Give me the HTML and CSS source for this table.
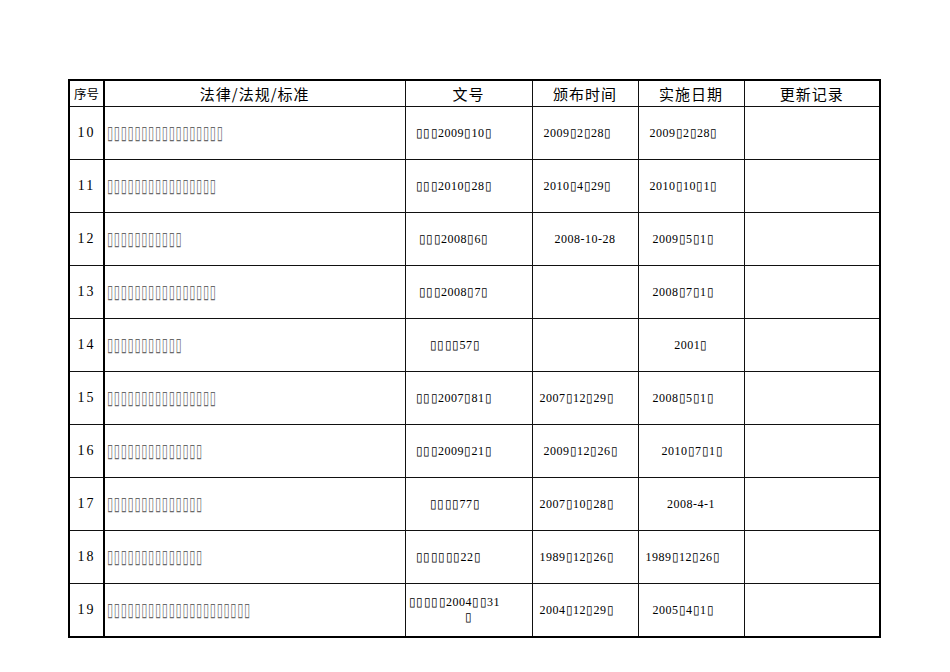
FILE: index.html
```html
<!DOCTYPE html>
<html lang="zh-CN">
<head>
<meta charset="utf-8">
<title>法律法规清单</title>
<link rel="stylesheet" href="styles.css">
</head>
<body>
<div class="page">
<table class="reg">
  <colgroup>
    <col class="c-seq"><col class="c-law"><col class="c-doc"><col class="c-pub"><col class="c-eff"><col class="c-upd">
  </colgroup>
  <thead>
    <tr>
      <th class="h-seq">序号</th>
      <th>法律/法规/标准</th>
      <th>文号</th>
      <th>颁布时间</th>
      <th>实施日期</th>
      <th>更新记录</th>
    </tr>
  </thead>
  <tbody>
    <tr><td class="seq">10</td><td class="law"><span>▯▯▯▯▯▯▯▯▯▯▯▯▯▯▯▯▯</span></td><td class="m p10">▯▯▯2009▯10▯</td><td class="m p11">2009▯2▯28▯</td><td class="m p11">2009▯2▯28▯</td><td></td></tr>
    <tr><td class="seq">11</td><td class="law"><span>▯▯▯▯▯▯▯▯▯▯▯▯▯▯▯▯</span></td><td class="m p10">▯▯▯2010▯28▯</td><td class="m p11">2010▯4▯29▯</td><td class="m p11">2010▯10▯1▯</td><td></td></tr>
    <tr><td class="seq">12</td><td class="law"><span>▯▯▯▯▯▯▯▯▯▯▯</span></td><td class="m p13">▯▯▯2008▯6▯</td><td class="m ctr">2008-10-28</td><td class="m p14">2009▯5▯1▯</td><td></td></tr>
    <tr><td class="seq">13</td><td class="law"><span>▯▯▯▯▯▯▯▯▯▯▯▯▯▯▯▯</span></td><td class="m p13">▯▯▯2008▯7▯</td><td></td><td class="m p14">2008▯7▯1▯</td><td></td></tr>
    <tr><td class="seq">14</td><td class="law"><span>▯▯▯▯▯▯▯▯▯▯▯</span></td><td class="m p24">▯▯▯▯57▯</td><td></td><td class="m ctr">2001▯</td><td></td></tr>
    <tr><td class="seq">15</td><td class="law"><span>▯▯▯▯▯▯▯▯▯▯▯▯▯▯▯▯</span></td><td class="m p10">▯▯▯2007▯81▯</td><td class="m p7">2007▯12▯29▯</td><td class="m p14">2008▯5▯1▯</td><td></td></tr>
    <tr><td class="seq">16</td><td class="law"><span>▯▯▯▯▯▯▯▯▯▯▯▯▯▯</span></td><td class="m p10">▯▯▯2009▯21▯</td><td class="m p11">2009▯12▯26▯</td><td class="m p23">2010▯7▯1▯</td><td></td></tr>
    <tr><td class="seq">17</td><td class="law"><span>▯▯▯▯▯▯▯▯▯▯▯▯▯▯</span></td><td class="m p24">▯▯▯▯77▯</td><td class="m p7">2007▯10▯28▯</td><td class="m ctr">2008-4-1</td><td></td></tr>
    <tr><td class="seq">18</td><td class="law"><span>▯▯▯▯▯▯▯▯▯▯▯▯▯▯</span></td><td class="m p10">▯▯▯▯▯▯22▯</td><td class="m p7">1989▯12▯26▯</td><td class="m p7">1989▯12▯26▯</td><td></td></tr>
    <tr><td class="seq">19</td><td class="law"><span>▯▯▯▯▯▯▯▯▯▯▯▯▯▯▯▯▯▯▯▯▯</span></td><td class="m p3"><div>▯▯▯▯▯2004▯▯31</div><div class="wrap2">▯</div></td><td class="m p7">2004▯12▯29▯</td><td class="m p14">2005▯4▯1▯</td><td></td></tr>
  </tbody>
</table>
</div>
</body>
</html>
```

FILE: styles.css
```css
html, body {
  margin: 0;
  padding: 0;
  background: #ffffff;
}

.page {
  padding: 79px 0 0 68px;
}

.reg {
  border-collapse: collapse;
  table-layout: fixed;
  width: 811px;
  border: 2px solid #000;
  color: #000;
}

.c-seq { width: 35px; }
.c-law { width: 301px; }
.c-doc { width: 127px; }
.c-pub { width: 106px; }
.c-eff { width: 106px; }
.c-upd { width: 136px; }

.reg th,
.reg td {
  border: 1px solid #111;
  padding: 0;
  overflow: hidden;
  white-space: nowrap;
}

.reg th {
  height: 25px;
  font-family: "Noto Sans CJK SC", "Noto Sans", sans-serif;
  font-weight: normal;
  font-size: 15px;
  letter-spacing: 1px;
  text-align: center;
  vertical-align: middle;
  line-height: 25px;
}

.reg th.h-seq {
  font-size: 12.5px;
  letter-spacing: 0;
}

.reg td {
  height: 52px;
  vertical-align: middle;
}

.reg td:first-child,
.reg th:first-child {
  border-right: 2px solid #000;
}

.seq {
  font-family: "Liberation Serif", serif;
  font-size: 14px;
  letter-spacing: 2px;
  text-align: center;
}

.law {
  font-family: "DejaVu Sans", sans-serif;
  font-size: 11px;
  color: #6a6a6a;
  padding-left: 2px !important;
  letter-spacing: 0.8px;
}

.law span {
  display: inline-block;
  transform: scaleY(1.75);
  transform-origin: 50% 55%;
}

.m {
  font-family: "Liberation Serif", serif;
  font-size: 12px;
  letter-spacing: 0.5px;
  text-align: left;
}

.ctr { text-align: center; }

.p3 { padding-left: 3px !important; }
.p7 { padding-left: 7px !important; }
.p10 { padding-left: 10px !important; }
.p11 { padding-left: 11px !important; }
.p13 { padding-left: 13px !important; }
.p14 { padding-left: 14px !important; }
.p23 { padding-left: 23px !important; }
.p24 { padding-left: 24px !important; }

.wrap2 {
  padding-left: 56px;
  line-height: 15px;
}
```
